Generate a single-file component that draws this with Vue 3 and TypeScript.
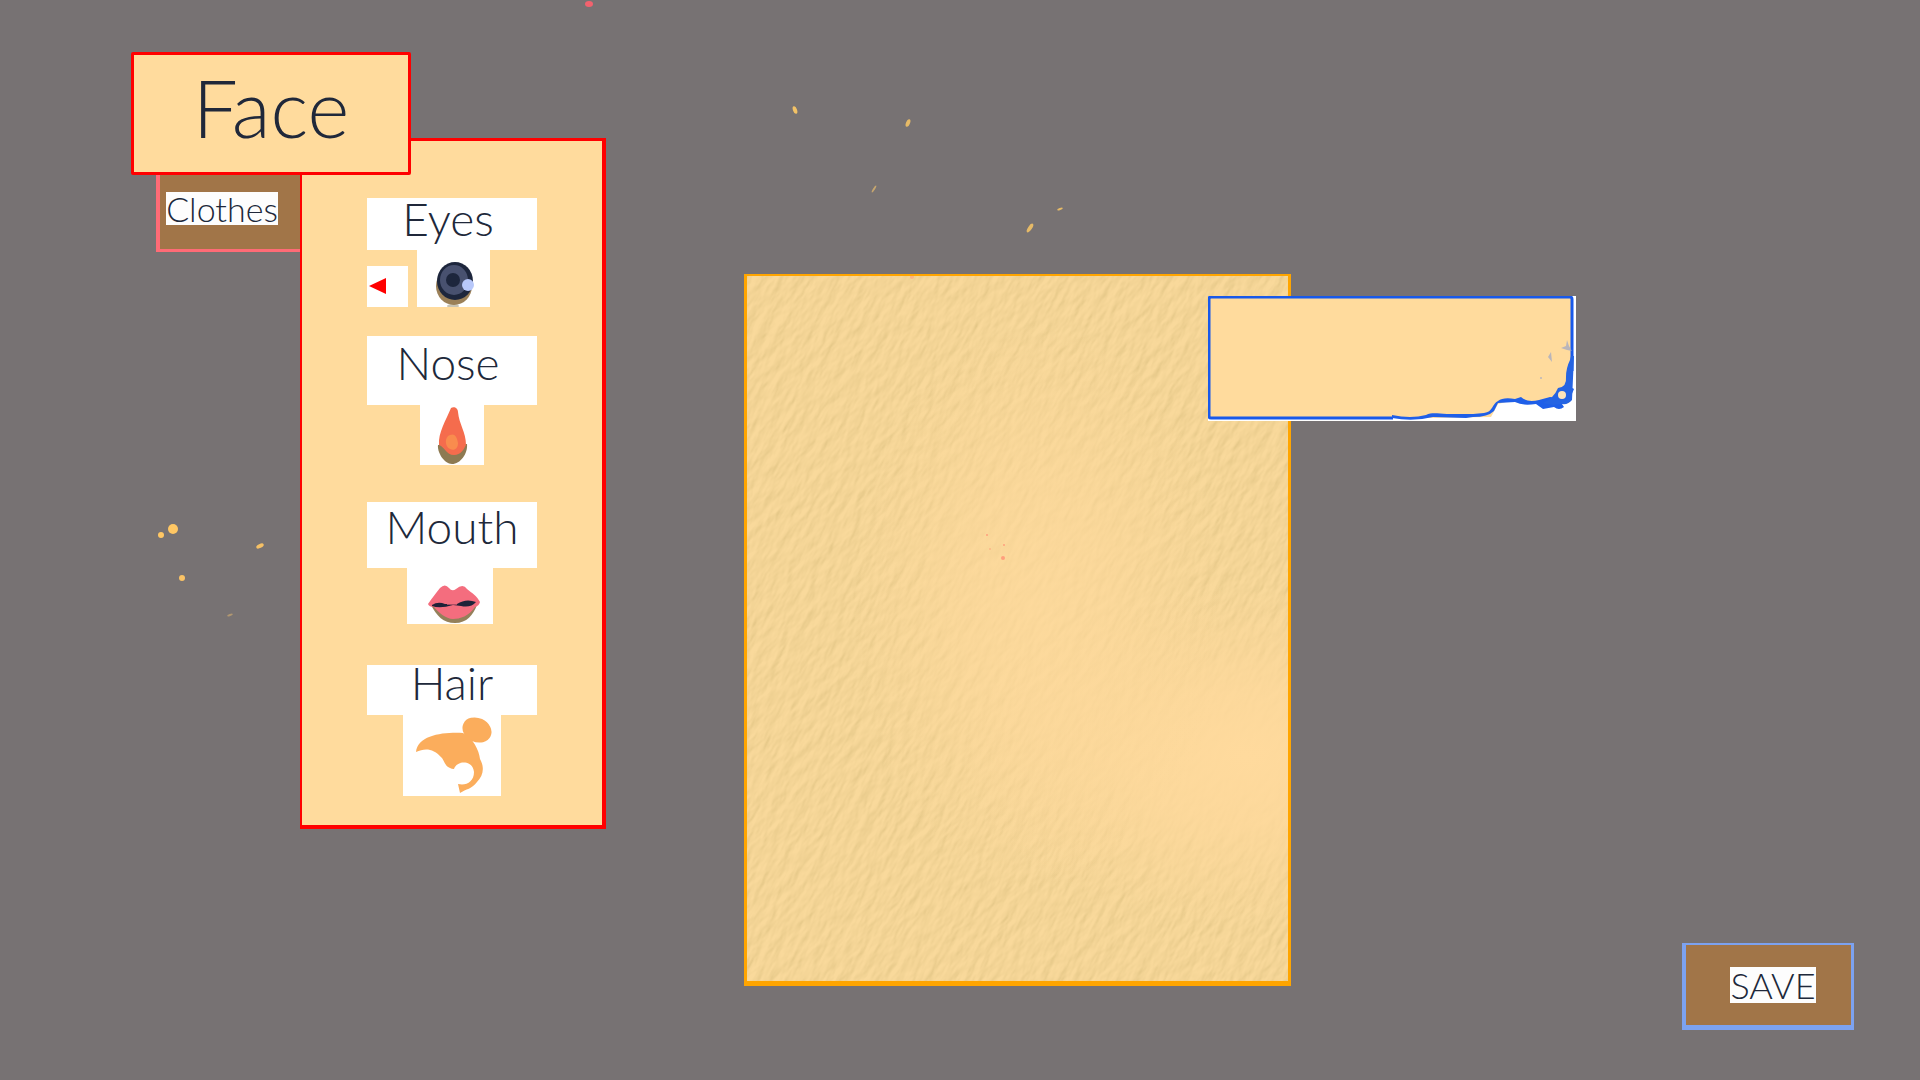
<script setup lang="ts">
import { ref } from 'vue'

type Feature = 'eyes' | 'nose' | 'mouth' | 'hair'

interface Speck {
  x: number
  y: number
  rx: number
  ry: number
  tilt: number
  color: string
  opacity: number
}

const features: { id: Feature; label: string }[] = [
  { id: 'eyes', label: 'Eyes' },
  { id: 'nose', label: 'Nose' },
  { id: 'mouth', label: 'Mouth' },
  { id: 'hair', label: 'Hair' },
]

const specks: Speck[] = [
  { x: 589, y: 4, rx: 4, ry: 3, tilt: 0, color: '#f2626e', opacity: 1 },
  { x: 795, y: 110, rx: 2, ry: 4, tilt: -20, color: '#f2c266', opacity: 1 },
  { x: 908, y: 123, rx: 2, ry: 4, tilt: 22, color: '#f2c266', opacity: 0.9 },
  { x: 874, y: 189, rx: 1, ry: 4, tilt: 32, color: '#d9b36e', opacity: 0.8 },
  { x: 1060, y: 209, rx: 3, ry: 1, tilt: -22, color: '#f2c266', opacity: 0.9 },
  { x: 1030, y: 228, rx: 2, ry: 5, tilt: 34, color: '#f2c266', opacity: 0.9 },
  { x: 173, y: 529, rx: 5, ry: 5, tilt: 0, color: '#ffc764', opacity: 1 },
  { x: 161, y: 535, rx: 3, ry: 3, tilt: 0, color: '#ffc764', opacity: 1 },
  { x: 260, y: 546, rx: 4, ry: 2, tilt: -25, color: '#f5c065', opacity: 1 },
  { x: 182, y: 578, rx: 3, ry: 3, tilt: 0, color: '#fac366', opacity: 1 },
  { x: 230, y: 615, rx: 3, ry: 1, tilt: -22, color: '#c9a771', opacity: 0.7 },
]

const tab = ref<'face' | 'clothes'>('face')
</script>

<template>
  <main class="scene">
    <svg class="specks" width="1920" height="1080" aria-hidden="true">
      <ellipse
        v-for="(s, i) in specks"
        :key="i"
        :cx="s.x"
        :cy="s.y"
        :rx="s.rx"
        :ry="s.ry"
        :fill="s.color"
        :opacity="s.opacity"
        :transform="`rotate(${s.tilt} ${s.x} ${s.y})`"
      />
    </svg>

    <aside class="menu">
      <button type="button" class="tab-face" @click="tab = 'face'">Face</button>
      <button type="button" class="tab-clothes" @click="tab = 'clothes'">
        <span class="tag">Clothes</span>
      </button>
      <div class="panel">
        <section v-for="f in features" :key="f.id" class="feature" :class="f.id">
          <h2 class="label">{{ f.label }}</h2>
          <div class="choices">
            <template v-if="f.id === 'eyes'">
              <button type="button" class="arrow" aria-label="Previous eyes">
                <svg width="41" height="41" viewBox="0 0 41 41">
                  <path d="M2 20 19 12V28Z" fill="#f00" />
                </svg>
              </button>
              <svg class="picture" width="73" height="57" viewBox="0 0 73 57">
                <ellipse cx="36" cy="56" rx="6" ry="2" fill="#c9c4b4" />
                <ellipse cx="37" cy="36" rx="18" ry="19" fill="#9b8058" />
                <ellipse cx="38" cy="31" rx="18" ry="19" fill="#1d263c" />
                <ellipse cx="37" cy="30" rx="14" ry="15" fill="#48516f" />
                <ellipse cx="36" cy="30" rx="7" ry="7" fill="#1d263c" />
                <circle cx="51" cy="35" r="6" fill="#b8c8fa" />
              </svg>
            </template>
            <svg v-else-if="f.id === 'nose'" class="picture" width="64" height="60" viewBox="0 0 64 60">
              <path d="M18 40C17 47 24 59 32 59S48 49 47 39Z" fill="#8d7a52" />
              <path d="M31 3C34 1 38 3 38 7C39 19 46 27 46 40C44 44 41 50 34 50C26 50 25 42 19 40C18 28 26 15 31 3Z" fill="#f56c4d" />
              <path d="M30 30C34 28 37 31 38 38C38 44 34 46 30 44C25 42 24 32 30 30Z" fill="#f98c4e" />
            </svg>
            <svg v-else-if="f.id === 'mouth'" class="picture" width="86" height="56" viewBox="0 0 86 56">
              <path d="M24 37C30 48 36 55 48 55S66 47 70 37Z" fill="#94805a" />
              <path d="M21 36C25 30 30 24 33 20Q38 15 42 20Q45 24 49 21Q56 15 60 21C65 25 70 28 73 34Q72 38 68 39C62 48 53 51 46 51S31 44 27 39Q22 39 21 36Z" fill="#f46d7e" />
              <path d="M25 37Q31 33 38 36L50 36Q59 30 69 34Q64 40 54 38L46 37Q33 41 25 38Z" fill="#1f2238" />
              <path d="M40 36H50V37H40Z" fill="#a84d62" />
            </svg>
            <svg v-else class="picture" width="98" height="81" viewBox="0 0 98 81">
              <ellipse cx="74" cy="15" rx="15" ry="12" transform="rotate(25 74 15)" fill="#fbad5c" />
              <path d="M13 37C15 20 40 17 60 18C70 23 76 35 77 44C82 53 80 61 74 67C69 74 63 74 57 78L55 69C63 71 71 67 71 57C70 45 54 45 51 54C42 53 42 47 39 43C30 33 22 33 13 37Z" fill="#fbad5c" />
            </svg>
          </div>
        </section>
      </div>
    </aside>

    <section class="easel" aria-label="Portrait">
      <svg class="paper" width="100%" height="100%" aria-hidden="true">
        <defs>
          <filter id="grain" x="0" y="0" width="100%" height="100%" color-interpolation-filters="sRGB">
            <feTurbulence type="fractalNoise" baseFrequency="0.12 0.05" numOctaves="3" seed="7" />
            <feDiffuseLighting surfaceScale="1" diffuseConstant="1" lighting-color="#fff">
              <feDistantLight azimuth="200" elevation="60" />
            </feDiffuseLighting>
            <feColorMatrix values="0 0 0 0 0.78  0 0 0 0 0.68  0 0 0 0 0.42  -1.5 0 0 0 1.4" />
          </filter>
          <radialGradient id="glow">
            <stop offset="0" stop-color="#ffda9d" />
            <stop offset="0.4" stop-color="#fed99c" stop-opacity="0.8" />
            <stop offset="1" stop-color="#fbd799" stop-opacity="0" />
          </radialGradient>
        </defs>
        <rect x="-400" y="-400" width="1400" height="1500" filter="url(#grain)" transform="rotate(28 270 350)" />
        <ellipse cx="500" cy="480" rx="290" ry="170" fill="url(#glow)" />
        <ellipse cx="290" cy="330" rx="190" ry="290" fill="url(#glow)" opacity="0.7" />
        <g fill="#ff9f7c">
          <circle cx="165" cy="1" r="2" opacity="0.6" />
          <circle cx="240" cy="259" r="1" />
          <circle cx="257" cy="269" r="1" />
          <circle cx="243" cy="273" r="1" opacity="0.6" />
          <circle cx="256" cy="282" r="2" />
        </g>
      </svg>

      <svg class="note" width="368" height="125" viewBox="0 0 368 125" aria-hidden="true">
        <rect width="368" height="125" fill="#fff" />
        <path d="M2 1H364V99L361 107L350 109L338 110L325 105L312 107L302 105L290 108L283 121L220 122H2Z" fill="#ffdb9d" />
        <path d="M185 122H3Q1 122 1 120V3Q1 1 3 1H362Q364 1 364 3V75" fill="none" stroke="#1859ea" stroke-width="3" />
        <path d="M184 119Q203 123 218 119C225 116 230 118 239 118H265L276 117C285 116 284 108 290 105Q295 101 307 103L313 101Q319 107 331 104L342 101Q352 103 359 95Q363 90 366 93L363 100Q365 106 354 108L356 111Q351 115 346 111L335 113L328 108Q314 110 307 106L290 107L286 115Q280 121 265 121L258 122L225 121Q205 126 184 122Z" fill="#1f5fe8" />
        <path d="M363 60L366 60L364 104Q360 109 354 108L345 109L335 107Q346 102 350 92Q359 91 358 81Q358 72 362 64Z" fill="#2564e3" />
        <circle cx="354" cy="99" r="4" fill="#ffe5ba" />
        <g fill="#9ca6c9" opacity="0.7">
          <path d="M359 44L361 50L364 55L359 54L353 52L358 50Z" />
          <path d="M343 56L344 66L340 61Z" />
          <circle cx="333" cy="82" r="1" />
        </g>
      </svg>
    </section>

    <button type="button" class="save"><span class="tag">SAVE</span></button>
  </main>
</template>

<style>
body {
  background: #777273;
}
</style>

<style scoped>
.scene {
  position: relative;
  display: flex;
  align-items: flex-start;
  box-sizing: border-box;
  min-height: 100vh;
  padding: 52px 66px 50px 131px;
  overflow: hidden;
  background: #777273;
  color: #20283a;
  font-family: Lato, "Open Sans", sans-serif;
  font-weight: 300;
}

button {
  box-sizing: border-box;
  margin: 0;
  padding: 0;
  color: inherit;
  font: inherit;
  cursor: pointer;
}

svg {
  display: block;
}

.specks {
  position: absolute;
  top: 0;
  left: 0;
  pointer-events: none;
}

.menu {
  position: relative;
  display: flex;
  flex: none;
  align-items: flex-start;
  padding: 86px 0 0 25px;
}

.tab-face {
  position: absolute;
  top: 0;
  left: 0;
  width: 280px;
  height: 123px;
  padding-bottom: 14px;
  border: 3px solid #f00;
  border-radius: 2px;
  background: #ffdb9d;
  font-size: 80px;
  line-height: 98px;
}

.tab-clothes {
  display: flex;
  width: 144px;
  height: 84px;
  margin-top: 30px;
  padding: 24px 0 0 6px;
  border: solid #ff6b76;
  border-width: 0 0 3px 4px;
  background: #a17548;
  font-size: 34px;
}

.tag {
  display: block;
  width: 112px;
  height: 33px;
  background: #fdfdfd;
  line-height: 33px;
  text-align: center;
}

.panel {
  box-sizing: border-box;
  width: 306px;
  padding: 57px 0 29px 65px;
  border: solid #f00;
  border-width: 3px 4px 4px 2px;
  background: #ffdb9d;
}

.feature {
  width: 170px;
}

.label {
  box-sizing: border-box;
  height: 52px;
  margin: 0;
  padding-right: 8px;
  background: #fff;
  font-size: 46px;
  font-weight: inherit;
  line-height: 42px;
  text-align: center;
}

.choices {
  display: flex;
  align-items: flex-end;
  justify-content: center;
}

.picture {
  background: #fff;
}

.eyes .choices {
  gap: 9px;
  justify-content: flex-start;
}

.nose {
  margin-top: 29px;
}

.nose .label {
  height: 69px;
  line-height: 54px;
}

.mouth {
  margin-top: 37px;
}

.mouth .label {
  height: 66px;
  padding-right: 0;
  line-height: 50px;
}

.mouth .choices {
  padding-right: 4px;
}

.hair {
  margin-top: 41px;
}

.hair .label {
  height: 50px;
  padding-right: 0;
  line-height: 36px;
}

.arrow {
  width: 41px;
  height: 41px;
  border: 0;
  background: #fff;
}

.easel {
  position: relative;
  box-sizing: border-box;
  flex: none;
  width: 547px;
  height: 712px;
  margin: 222px 0 0 138px;
  border: solid #ffa500;
  border-width: 2px 3px 5px;
  background: #f9d99b;
}

.paper {
  overflow: hidden;
}

.note {
  position: absolute;
  top: 20px;
  left: 461px;
}

.save {
  display: flex;
  align-items: center;
  align-self: flex-end;
  justify-content: center;
  width: 172px;
  height: 87px;
  margin-left: auto;
  padding-left: 9px;
  border: solid #7ca2f0;
  border-width: 2px 3px 5px 4px;
  background: #a17548;
  font-size: 36px;
}

.save .tag {
  width: 86px;
  height: 36px;
  line-height: 36px;
}
</style>
